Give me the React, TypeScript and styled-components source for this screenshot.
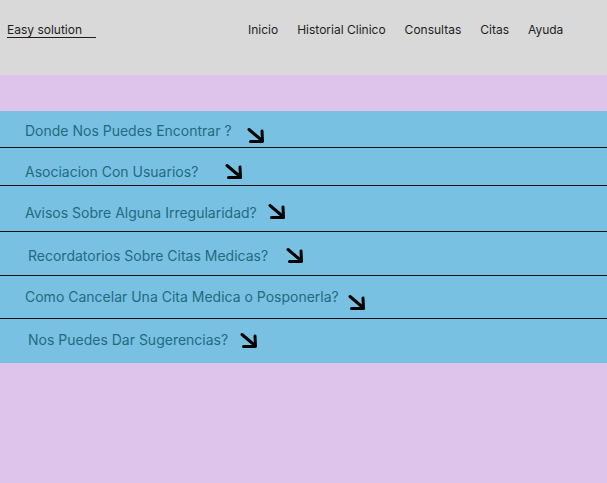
import React from 'react';
import styled, { createGlobalStyle } from 'styled-components';

const GlobalStyle = createGlobalStyle`
  html, body {
    margin: 0;
    padding: 0;
    background: #dec3eb;
    font-family: Inter, "Noto Sans", sans-serif;
  }
`;

const Page = styled.div`
  width: 607px;
  min-height: 483px;
  background: #dec3eb;
`;

const Header = styled.header`
  height: 75px;
  background: #d9d9d9;
  display: flex;
  align-items: flex-start;
  padding: 22px 0 0 7px;
  box-sizing: border-box;
`;

const Brand = styled.div`
  flex: 0 0 241px;
  font-size: 12px;
  color: #1e1e1e;
  line-height: 16px;

  span {
    display: inline-block;
    width: 89px;
    border-bottom: 1px solid #1e1e1e;
    line-height: 15px;
  }
`;

const Nav = styled.nav`
  display: flex;
  gap: 19px;
  font-size: 12px;
  color: #1e1e1e;
  line-height: 16px;
`;

const NavItem = styled.a`
  cursor: pointer;
`;

const Faq = styled.section`
  margin-top: 36px;
  background: #79c1e2;
`;

const Row = styled.div<{ $h: number; $indent: number; $pt: number; $last?: boolean }>`
  height: ${(p) => p.$h}px;
  display: flex;
  align-items: flex-start;
  padding: ${(p) => p.$pt}px 0 0 ${(p) => p.$indent}px;
  box-sizing: border-box;
  border-bottom: ${(p) => (p.$last ? 'none' : '1px solid #111')};
`;

const Question = styled.span`
  font-size: 14px;
  line-height: 17px;
  color: #1f6b80;
`;

const Arrow = styled.svg<{ $gap: number; $drop: number }>`
  margin-left: ${(p) => p.$gap}px;
  margin-top: ${(p) => p.$drop}px;
  flex: 0 0 auto;
`;

const questions = [
  { text: 'Donde Nos Puedes Encontrar ?', h: 37, indent: 25, pt: 11, gap: 15, drop: 5 },
  { text: 'Asociacion Con Usuarios?', h: 38, indent: 25, pt: 15, gap: 27, drop: 0 },
  { text: 'Avisos Sobre Alguna Irregularidad?', h: 46, indent: 25, pt: 18, gap: 11, drop: -1 },
  { text: 'Recordatorios Sobre Citas Medicas?', h: 44, indent: 28, pt: 15, gap: 18, drop: 0 },
  { text: 'Como Cancelar Una Cita Medica o Posponerla?', h: 43, indent: 25, pt: 12, gap: 9, drop: 6 },
  { text: 'Nos Puedes Dar Sugerencias?', h: 44, indent: 28, pt: 12, gap: 12, drop: 1 },
];

function ArrowIcon({ gap, drop }: { gap: number; drop: number }) {
  return (
    <Arrow $gap={gap} $drop={drop} width="18" height="17" viewBox="0 0 18 17">
      <g stroke="#000" strokeWidth="3" strokeLinecap="round" strokeLinejoin="round" fill="none">
        <path d="M2 2.5 L15 13.5" />
        <path d="M15 4 L15.5 14.5 L3.5 14.5" />
      </g>
    </Arrow>
  );
}

export default function App() {
  return (
    <Page>
      <GlobalStyle />
      <Header>
        <Brand>
          <span>Easy solution</span>
        </Brand>
        <Nav>
          <NavItem>Inicio</NavItem>
          <NavItem>Historial Clinico</NavItem>
          <NavItem>Consultas</NavItem>
          <NavItem>Citas</NavItem>
          <NavItem>Ayuda</NavItem>
        </Nav>
      </Header>
      <Faq>
        {questions.map((q, i) => (
          <Row
            key={q.text}
            $h={q.h}
            $indent={q.indent}
            $pt={q.pt}
            $last={i === questions.length - 1}
          >
            <Question>{q.text}</Question>
            <ArrowIcon gap={q.gap} drop={q.drop} />
          </Row>
        ))}
      </Faq>
    </Page>
  );
}
